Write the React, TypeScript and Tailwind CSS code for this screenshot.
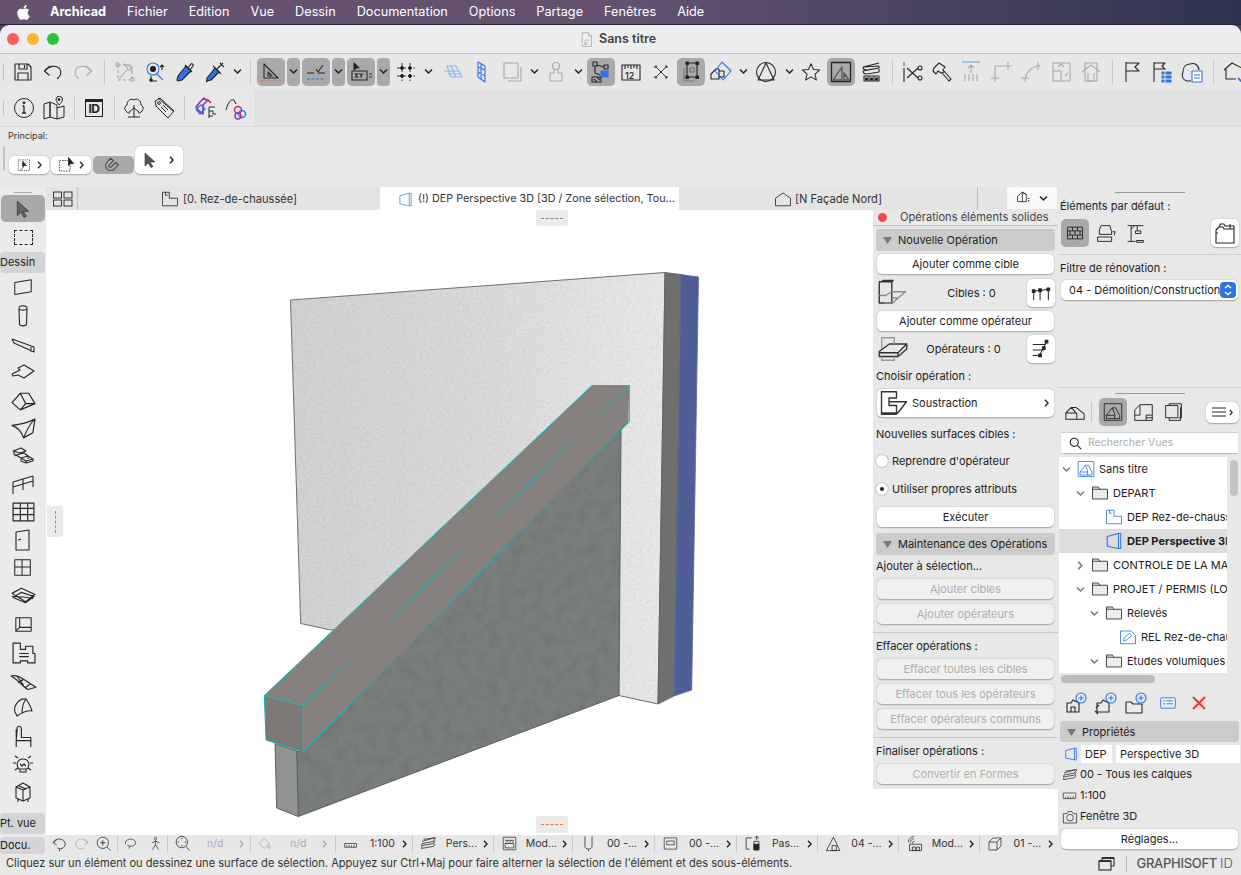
import React from 'react';
import { FaApple } from 'react-icons/fa';

const BLUE = '#2f74e6';
const ORANGE = '#e8752b';
const GREY = '#a8a8a8';

function Ic({ s = 24, c = '#262626', w = 1.1, children }: { s?: number; c?: string; w?: number; children: React.ReactNode }) {
  return (
    <svg width={s} height={s} viewBox="0 0 24 24" fill="none" stroke={c} strokeWidth={w} strokeLinejoin="round" className="shrink-0">
      {children}
    </svg>
  );
}

function Chev({ c = '#222' }: { c?: string }) {
  return (
    <svg width="9" height="7" viewBox="0 0 9 7" fill="none" stroke={c} strokeWidth="1.5" className="shrink-0">
      <path d="M1 1.5 4.5 5 8 1.5" />
    </svg>
  );
}

function Gt({ c = '#333', s = 7 }: { c?: string; s?: number }) {
  return (
    <svg width={s - 2} height={s + 1} viewBox="0 0 5 8" fill="none" stroke={c} strokeWidth="1.4" className="shrink-0">
      <path d="M1 .8 4 4 1 7.2" />
    </svg>
  );
}

const tb: Record<string, React.ReactNode> = {
  save: <Ic><path d="M4 4h13l3 3v13H4z" /><path d="M8 4v5h8V4M13.5 5v3M7 20v-7h10v7" /></Ic>,
  undo: <Ic><path d="M9 6 3.5 11l5 4.5" /><path d="M3.5 11c4-5 11-6.500 15-2.500 3 3.500 1 8-2.500 10.500" /></Ic>,
  redo: <Ic c="#aaa"><path d="m15 6 5.500 5-5 4.500" /><path d="M20.500 11c-4-5-11-6.500-15-2.500-3 3.500-1 8 2.500 10.500" /></Ic>,
  pick: <Ic c={GREY}><path d="M5 5h14v15H5z" strokeDasharray="3 2" /><path d="m6 19 9-10M11 4l6 2 2 5-3-1-5-6z" /><rect x="3" y="3" width="3" height="3" /><rect x="18" y="18" width="3" height="3" /></Ic>,
  find: <Ic><circle cx="10" cy="9" r="6" stroke={BLUE} /><circle cx="10" cy="9" r="2.500" fill="#222" /><path d="m14 14 6 6" stroke={BLUE} /><path d="M19 5v5M17 7l2-2 2 2M8 16v5h6" /><circle cx="8" cy="20" r="1.200" fill="#222" /></Ic>,
  drop: <Ic><path d="m13 6 5 5-9 9-4 1-1-1 1-4z" fill={BLUE} stroke="#222" /><path d="m12 5 7 7M15 8l3-4c1-1 3 1 2 2l-3 4" /></Ic>,
  syr: <Ic><path d="m12 8 4 4-8 8-4 1 0-3z" fill={BLUE} stroke="#222" /><path d="m10 6 8 8M14 9l6-6M17 3l4 4M3 22l2-2" /></Ic>,
  guide: <Ic><path d="M5 4v14h14z" /><path d="M9 12v4h4z" /><path d="M2 21h20" stroke={ORANGE} strokeDasharray="2.500 1.500" /></Ic>,
  snap: <Ic><path d="M3 13h7M14 13h7" /><path d="m12 9 2 3 5-7" /><path d="M3 19h18" stroke={BLUE} strokeDasharray="3 1.500" /></Ic>,
  xy: <Ic><path d="m5 3 0 7 2-2 3 0z" fill="#222" /><rect x="3" y="11" width="15" height="9" /><text x="5" y="18" fontSize="6.500" fontFamily="Inter" fontWeight="700" fill="#222" stroke="none">XY</text><path d="M20 14h3M20 17h3" /></Ic>,
  grid: <Ic w={0.9}><path d="M8 3v18M16 3v18M3 8h18M3 16h18" strokeDasharray="3.500 2" /><circle cx="8" cy="8" r="1.500" fill="#111" /><circle cx="16" cy="8" r="1.500" fill="#111" /><circle cx="8" cy="16" r="1.500" fill="#111" /><circle cx="16" cy="16" r="1.500" fill="#111" /></Ic>,
  plane: <Ic c="#8ab6ee"><path d="M8 6h9l6 11h-11zM12 6l5 11M5 11h15M9 14h12" /></Ic>,
  plane2: <Ic c={BLUE}><path d="M8 2 15 6v16l-7-5zM8 7l7 3M8 12l7 4M11 4v16" /></Ic>,
  stack: <Ic c={GREY}><rect x="4" y="3" width="14" height="15" /><path d="M8 21h13V7" /></Ic>,
  stamp: <Ic c={GREY}><circle cx="12" cy="6" r="3.500" /><path d="M10 9v4H6v8h12v-8h-4V9" /></Ic>,
  sel1: <Ic><rect x="4" y="2" width="4" height="4" /><rect x="15" y="5" width="4" height="4" /><path d="m8 5 7 2M6 6v7l5 2" /><rect x="12" y="11" width="7" height="6" fill={BLUE} stroke={BLUE} /><rect x="3" y="17" width="9" height="5" /><path d="M5 19l3 3M8 17l3 3" /></Ic>,
  ruler: <Ic><path d="M3 5h18v15H3V5zM6 5v4M9 5v3M12 5v4M15 5v3M18 5v4" /><text x="6" y="19" fontSize="9" fontFamily="Inter" fontWeight="500" fill="#222" stroke="none">12</text></Ic>,
  cross: <Ic w={0.9}><path d="m7 7 10 10M17 7 7 17" /><path d="M7 5v3M5 7h3M17 5v3M19 7h-3M7 19v-3M5 17h3M17 19v-3M19 17h-3" /></Ic>,
  sel2: <Ic><path d="M8 3h10v14H8z" /><path d="M5 8v13h11" stroke="#777" /><rect x="7" y="2" width="2.500" height="2.500" fill="#222" /><rect x="17" y="2" width="2.500" height="2.500" fill="#222" /><rect x="7" y="16" width="2.500" height="2.500" fill="#222" /><rect x="17" y="16" width="2.500" height="2.500" fill="#222" /><rect x="11" y="8" width="4" height="4" stroke="#777" /></Ic>,
  cube: <Ic><path d="M2 14 7 9h3v10H2z" /><path d="m13 2 9 9-8 9-8-9z" stroke={BLUE} /><path d="M10 11h5v6h-5" /></Ic>,
  tri: <Ic><circle cx="12" cy="12" r="9.500" /><path d="M12 3 4 20h16z" /></Ic>,
  star: <Ic s={22}><path d="m12 3 2.700 6.200 6.800.600-5.200 4.400 1.600 6.600L12 17.300l-5.900 3.500 1.600-6.600L2.500 9.800l6.800-.600z" /></Ic>,
  draft: <Ic w={1.3}><rect x="2.500" y="2.500" width="19" height="19" /><path d="M4 20 13 7v13zM15 13l5 7h-5zM15 16h3" stroke="#555" /></Ic>,
  layers: <Ic><path d="M4 7 20 3M4 7l16-1M4 7c0 2 2 3 4 3l12-2V6M4 11l16-3M4 11c0 2 2 3 4 3l12-2v-3" /><path d="M5 16h15v5H5zM10 16v5M15 16v5" /><path d="M6.500 18h2v2h-2zM11.500 18h2v2h-2zM16.500 18h2v2h-2z" fill="#222" /></Ic>,
  scis: <Ic><path d="M4 2v4" stroke={BLUE} /><path d="M4 8v14" /><path d="m7 8 11 10M7 18 18 8" /><circle cx="20" cy="8" r="2" /><circle cx="20" cy="18" r="2" /></Ic>,
  hammer: <Ic><path d="M5 8 10 3l6 4-2 3 1 2-3 1-3-2-2 3-3-3zM13 13l7 8 2-2-7-8" /></Ic>,
  up: <Ic c="#aaa"><path d="M3 2h18" stroke="#8ab6ee" strokeWidth="1.500" /><path d="M12 5v8M9 8l3-3 3 3M6 14v7M10 14v7M14 14v7M18 14v7" /></Ic>,
  fillet: <Ic c="#aaa"><path d="M6 22V6h17M2 18h8M19 2v8" /></Ic>,
  curve: <Ic c="#aaa"><path d="M6 22c0-9 6-16 15-16M2 18h8M19 2v8" /></Ic>,
  move: <Ic c="#aaa"><path d="M4 3h17v18H4zM4 11h8v10M9 7l3-3 3 3M16 16l3-3" /></Ic>,
  house: <Ic c="#aaa"><path d="M6 3h12v18H6zM3 12l9-7 9 7" /><path d="M9 13v8h6v-8" /></Ic>,
  flag: <Ic><path d="M6 2v20M6 3h13l-4 4 4 4H6" /></Ic>,
  flist: <Ic><path d="M5 2v20M5 3h11l-3 3 3 3H5" /><path d="M13 12h2v2h-2zM17 12h5v2h-5zM13 16h2v2h-2zM17 16h5v2h-5zM13 20h2v2h-2zM17 20h5v2h-5z" fill={BLUE} stroke={BLUE} /></Ic>,
  cloud: <Ic><path d="M11 21H7C3 20 1 16 3 12c0-5 3-8 7-8 5-2 9 2 9 6" /><rect x="12" y="11" width="10" height="11" fill="#fff" stroke={BLUE} /><path d="M14 15h6M14 18h6" stroke={BLUE} /></Ic>,
  last: <Ic><path d="M2 10 10 3l10 5v5M4 9v10h10" /><path d="m16 18 3 3 5-6" stroke={BLUE} strokeWidth="1.800" /></Ic>,
  info: <Ic w={1}><circle cx="12" cy="12" r="9.500" /><path d="M12 10v7M10 17h4M10.500 10H12" strokeWidth="1.300" /><circle cx="12" cy="6.800" r="1" fill="#222" /></Ic>,
  map: <Ic w={1}><path d="M2 8l6-2v15l-6 2zM8 6l7 3v14l-7-2zM15 12l7-2v11l-7 2" /><path d="M17 9c-2-3-3-4-3-6a3.300 3.300 0 0 1 6.500 0c0 2-1.500 4-3.500 6z" fill="#eee" /><circle cx="17" cy="3.500" r="1" fill="#222" /></Ic>,
  tree: <Ic w={1}><path d="M12 21V9M7 16l5-4 5 4M6 21h12M8 17c-5 0-7-6-3-8 0-5 5-7 7-5 3-2 7 0 7 5 4 2 2 8-3 8" /></Ic>,
  tag: <Ic w={1}><path d="M3 5 8 2l14 13-6 7L4 10zM6 2l15 13" /><circle cx="7" cy="7" r="1.400" /><path d="m9 11 5 5M11 9l5 5" /></Ic>,
  attrs: <Ic w={1}><path d="M7 6 11 2l3 3-4 4v9l-4-3-3-4z" stroke="#8a3aa8" strokeWidth="1.700" /><path d="M8 9 12 13 7 18 3 13z" stroke={BLUE} strokeWidth="1.400" /><path d="M14 3l4 4" stroke="#d7263d" strokeWidth="1.700" /><path d="M16 11v11M16 11h6M16 15h4v3M16 20h4M20 18h3" /></Ic>,
  attrs2: <Ic w={1}><path d="M3 14C5 6 8 3 11 4l2 4" /><circle cx="15" cy="14" r="3.500" stroke="#d7263d" strokeWidth="1.400" /><circle cx="19" cy="18" r="3.500" stroke={BLUE} strokeWidth="1.400" /><circle cx="15" cy="20" r="3" stroke="#8a3aa8" strokeWidth="1.400" /></Ic>,
};

const dr: React.ReactNode[] = [
  <Ic s={22}><path d="M3 6 21 3v13L3 19z" /></Ic>,
  <Ic s={24}><path d="M8 4c0-3 8-3 8 0l-.5 16c0 2.500-7 2.500-7 0zM8 5c1 1.500 7 1.500 8 0" /></Ic>,
  <Ic s={24}><path d="M1 7l22 8v5L3 11zM20 15v5" /></Ic>,
  <Ic s={24}><path d="M1 14 9 10 7 8l6-3 10 6-10 7-6-3-5 1z" /></Ic>,
  <Ic s={25}><path d="M1 14 9 5h8l6 10-14 6zM9 5l5 10h9M14 15l-5 6" /></Ic>,
  <Ic s={25}><path d="M1 9c5 2 9 5 11 12C15 14 19 6 23 3c-6 3-13 5-22 6zM23 3l-2 13-9 5" /></Ic>,
  <Ic s={24}><path d="M2 7l8-3 5 3-6 2zM5 11l8-2 4 3-7 2zM10 14l7-2 5 3-7 2zM3 8v2l2 2M10 15v2l5 2v-2M17 13v2M22 15v2l-7 2" /></Ic>,
  <Ic s={24}><path d="M2 10 22 4M2 22V10M22 4v11M12 7v11M2 15 22 9" /></Ic>,
  <Ic s={25}><path d="M2 3h20v17H2zM2 8h20M2 14h20M9 3v17M16 3v17" /></Ic>,
  <Ic s={24}><path d="M5 4 18 2v20H5zM7 12l3-1" /></Ic>,
  <Ic s={22}><path d="M3 3h17v17H3zM3 11h17M11 3v17" /></Ic>,
  <Ic s={25}><path d="M1 9 10 4l13 6-9 7zM2 13l8-5 12 4-8 6zM1 12c6 0 12 0 20 2" /></Ic>,
  <Ic s={23}><path d="M4 5h16v14H4zM8 5v10h12M4 19l4-4" /></Ic>,
  <Ic s={25}><path d="M2 3h7v6h5V6h7v7h2v9h-7v-2H9v2H2zM8 13h9M8 16h9" /></Ic>,
  <Ic s={27}><path d="M1 8c6-2 12 4 22 10l-7 2C12 18 7 11 1 8zM6 8l6 8M12 11l-5 3M18 15l-4 3" /></Ic>,
  <Ic s={24}><path d="M4 16C2 10 8 2 15 3c2 3 5 8 6 12-5-1-12 3-15 5zM15 3c-3 4-4 10-4 14" /></Ic>,
  <Ic s={25}><path d="M6 3c3-2 4 0 4 2v8h9v3H5zM5 16v6M19 16v6M5 5v8" /></Ic>,
  <Ic s={24}><path d="M8 17c-4-5-1-10 4-10s8 5 4 10zM9 17v3h6v-3M9 12l2 2 2-2 2 2M2 11h3M19 11h3M4 4l3 2M20 4l-3 2M4 18l3-2M20 18l-3-2" /></Ic>,
  <Ic s={24}><path d="M5 7l7-4 7 4v11l-7 3-7-3zM5 7l7 3 7-3M12 10v11M8 6l7 3" /><path d="M7 19v3M17 19v3" /></Ic>,
];

function Tool({ w, name, sel }: { w: string; name: string; sel?: boolean }) {
  return (
    <div className={`${w} h-full flex items-center justify-center shrink-0`}>
      {sel ? (
        <div className="w-[28px] h-[28px] rounded-[5px] bg-[#a9a9ab] flex items-center justify-center">{tb[name]}</div>
      ) : (
        tb[name]
      )}
    </div>
  );
}

function Cv({ w = 'w-[14px]', sel }: { w?: string; sel?: boolean }) {
  return (
    <div className={`${w} h-full flex items-center justify-center shrink-0`}>
      {sel ? (
        <div className="w-[13px] h-[28px] rounded-[4px] bg-[#a9a9ab] flex items-center justify-center"><Chev /></div>
      ) : (
        <Chev />
      )}
    </div>
  );
}

function Sep({ w = 'w-[12px]', h = 'h-[24px]' }: { w?: string; h?: string }) {
  return (
    <div className={`${w} h-full flex items-center justify-center shrink-0`}>
      <div className={`w-px ${h} bg-[#c8c8c8]`} />
    </div>
  );
}

function Header({ title }: { title: string }) {
  return (
    <div className="mx-[3px] h-[22px] pt-px bg-[#cbcbcb] rounded-[3px] flex items-center text-[11px] text-[#222] pl-[7px]">
      <svg width="9" height="7" viewBox="0 0 9 7" className="mr-[6px]"><path d="M0 0h9L4.500 7z" fill="#777" /></svg>
      {title}
    </div>
  );
}

function Btn({ children, off, className = '' }: { children: React.ReactNode; off?: boolean; className?: string }) {
  return (
    <div className={`mx-[4px] h-[20px] rounded-[5px] flex items-center justify-center text-[11px] shadow-[0_0.5px_1.5px_rgba(0,0,0,0.3)] ${off ? 'bg-[#f0f0f0] text-[#adadad]' : 'bg-white text-[#222]'} ${className}`}>
      {children}
    </div>
  );
}

function SqBtn({ children }: { children: React.ReactNode }) {
  return <div className="w-[28px] h-[28px] bg-white rounded-[5px] shadow-[0_0.5px_1.5px_rgba(0,0,0,0.3)] flex items-center justify-center shrink-0">{children}</div>;
}

function Lbl({ children, className = '' }: { children: React.ReactNode; className?: string }) {
  return <div className={`h-[14px] leading-[14px] text-[11px] text-[#222] ${className}`}>{children}</div>;
}

function Radio({ on, label, className = '' }: { on?: boolean; label: string; className?: string }) {
  return (
    <div className={`h-[14px] flex items-center text-[11px] text-[#222] pl-[3px] ${className}`}>
      <div className="w-[12px] h-[12px] rounded-full bg-white shadow-[0_0_1.5px_rgba(0,0,0,0.5)] flex items-center justify-center mr-[4px]">
        {on && <div className="w-[4px] h-[4px] rounded-full bg-[#222]" />}
      </div>
      {label}
    </div>
  );
}

const Folder = ({ s = 18 }: { s?: number }) => (
  <Ic s={s}><path d="M2 20V4h8l2 3h10v13z" fill="#ececec" /><path d="M2 7h10" /></Ic>
);

const PlanIcon = ({ c = BLUE }: { c?: string }) => (
  <Ic s={18} c={c}><path d="M2 3h10v8h10v10H2zM6 3v4h3" /></Ic>
);

const treeRows = [
  { d: 0, t: 'Sans titre', chev: 'down', icon: <Ic s={18} c={BLUE}><rect x="1.500" y="2" width="21" height="20" /><path d="M4 16 11 7h4l5 9v4H4zM11 7l3 7v6M4 16h10" /></Ic> },
  { d: 1, t: 'DEPART', chev: 'down', icon: <Folder /> },
  { d: 2, t: 'DEP Rez-de-chaussée', icon: <PlanIcon /> },
  { d: 2, t: 'DEP Perspective 3D', sel: true, icon: <Ic s={18} c={BLUE} w={1.4}><path d="M3 6 18 2h3v20h-3L3 19zM18 2v20" /></Ic> },
  { d: 1, t: 'CONTROLE DE LA MAQUETTE', chev: 'right', icon: <Folder /> },
  { d: 1, t: 'PROJET / PERMIS (LOT 1)', chev: 'down', icon: <Folder /> },
  { d: 2, t: 'Relevés', chev: 'down', icon: <Folder /> },
  { d: 3, t: 'REL Rez-de-chaussée', icon: <Ic s={18} c={BLUE}><path d="M2 4h14l6 6v11H2z" /><path d="m6 17 1-4 7-6 3 3-7 6z" /></Ic> },
  { d: 2, t: 'Etudes volumiques', chev: 'down', icon: <Folder /> },
];

const indent = ['pl-0', 'pl-[14px]', 'pl-[28px]', 'pl-[42px]'];

const quick = [
  { w: 'w-[77px]', icon: <Ic s={15}><path d="M1 12h19M1 12v6h19v-6M4 15v3M8 14v4M12 15v3M16 14v4" /></Ic>, t: '1:100' },
  { w: 'w-[81px]', icon: <Ic s={17}><path d="M3 9 20 4M5 6l17-2-3 5L3 12M3 12l-1 3 17-3 2-4M3 16l-1 3 17-3 2-4" /></Ic>, t: 'Pers...' },
  { w: 'w-[79px]', icon: <Ic s={15}><rect x="2" y="2" width="20" height="20" /><path d="M5 7h14M5 12l5-5M10 12l5-5M15 12l4-4M5 12h14v7H5z" /></Ic>, t: 'Mod...' },
  { w: 'w-[82px]', icon: <Ic s={17}><path d="M7 2v14c0 5 10 5 10 0V2M12 20v3" /></Ic>, t: '00 -...' },
  { w: 'w-[82px]', icon: <Ic s={15}><rect x="2" y="3" width="20" height="18" /><rect x="6" y="8" width="12" height="6" /></Ic>, t: '00 -...' },
  { w: 'w-[81px]', icon: <Ic s={17}><path d="M3 4h8M3 4v16h5M14 9h7v12h-7zM15 4l3-2 3 2M18 2v5" /><rect x="14" y="13" width="7" height="8" fill="#222" /></Ic>, t: 'Pas...' },
  { w: 'w-[81px]', icon: <Ic s={17}><path d="M2 22 12 3l9 19zM10 15h6v7h-6z" /></Ic>, t: '04 -...' },
  { w: 'w-[81px]', icon: <Ic s={17}><path d="M3 10c1-5 4-7 8-8M6 11c0-3 2-5 5-6M9 12c0-2 1-3 3-3" /><path d="M5 13h17v9H5zM9 17h4v5H9zM15 17h4v5h-4z" /></Ic>, t: 'Mod...' },
  { w: 'w-[78px]', icon: <Ic s={16}><path d="M3 9h12v12H3zM3 9l6-6h12l-6 6M21 3v12l-6 6" /></Ic>, t: '01 -...' },
];

function Bldg() {
  const wall = '290.500,300 665,272.500 658,704 619,695.500 610,620 331,630 300.700,623.500';
  const conc = '628,422 621,429 619,695.500 298.300,816.500 296.700,751 303,752';
  return (
    <svg width="827" height="625" viewBox="46 210 827 625" className="block">
      <defs>
        <linearGradient id="plaster" x1="290" y1="0" x2="665" y2="0" gradientUnits="userSpaceOnUse">
          <stop offset="0" stopColor="#d2d2d2" />
          <stop offset="0.55" stopColor="#dbdbdb" />
          <stop offset="1" stopColor="#e9e9e9" />
        </linearGradient>
        <linearGradient id="sideC" x1="275" y1="0" x2="298" y2="0" gradientUnits="userSpaceOnUse">
          <stop offset="0" stopColor="#8e9190" />
          <stop offset="1" stopColor="#939695" />
        </linearGradient>
        <filter id="fine" x="0" y="0" width="100%" height="100%">
          <feTurbulence type="fractalNoise" baseFrequency="0.3 0.45" numOctaves="2" seed="4" />
          <feColorMatrix values="0 0 0 0 0 0 0 0 0 0 0 0 0 0 0 0.1 0 0 0 -0.036" />
          <feComposite operator="in" in2="SourceGraphic" />
        </filter>
        <filter id="blotch" x="0" y="0" width="100%" height="100%">
          <feTurbulence type="fractalNoise" baseFrequency="0.09" numOctaves="4" seed="9" />
          <feColorMatrix values="0 0 0 0 0 0 0 0 0 0 0 0 0 0 0 0.14 0 0 0 -0.05" />
          <feComposite operator="in" in2="SourceGraphic" />
        </filter>
      </defs>

      {/* back wall */}
      <polygon points={wall} fill="url(#plaster)" stroke="#707070" strokeWidth="1" />
      <polygon points={wall} filter="url(#fine)" />
      <polygon points="665,272.500 681,274.500 674,696 658,704" fill="#6e706e" stroke="#5f5f5f" strokeWidth="0.800" />
      <polygon points="681,274.500 698.500,277 691.700,690 674,696" fill="#4f5f95" stroke="#5c6a9a" strokeWidth="0.800" />

      {/* concrete wall */}
      <polygon points={conc} fill="#797d7b" stroke="#5d5f5e" strokeWidth="1" />
      <polygon points={conc} filter="url(#blotch)" />
      <polygon points="275,743.500 296.700,751 298.300,816.500 276.700,808" fill="url(#sideC)" stroke="#5d5f5e" strokeWidth="1" />

      {/* beam */}
      <polygon points="592,385.500 629.300,385.500 303.300,705.500 264.300,695.600" fill="#86817f" />
      <polygon points="629.300,385.500 628.300,421.800 303.300,752 303.300,705.500" fill="#86807e" />
      <polygon points="264.300,695.600 303.300,705.500 303.300,752 266,740" fill="#7d7876" />
      <g fill="none" stroke="#12b5b8" strokeWidth="1">
        <path d="M592 385.500h37.300v36.300L303.300 752 266 740l-1.700-44.400z" />
        <path d="M264.300 695.600 303.300 705.500 629.300 385.500M303.300 705.500V752" />
      </g>
    </svg>
  );
}

export default function App() {
  return (
    <div className="w-[1241px] h-[875px] overflow-hidden flex flex-col bg-[#4a3f55] font-['Inter',sans-serif] text-[#222]">
      {/* menu bar */}
      <div className="h-[25px] shrink-0 flex items-center bg-[linear-gradient(90deg,#64526f_0%,#64526f_50%,#2e3350_100%)] border-b border-[#2a2433] text-white text-[12.7px] pl-[15px]">
        <FaApple className="text-[17px] mr-[18px]" />
        <span className="font-bold mr-[21px]">Archicad</span>
        <span className="mr-[21px]">Fichier</span>
        <span className="mr-[21px]">Edition</span>
        <span className="mr-[21px]">Vue</span>
        <span className="mr-[21px]">Dessin</span>
        <span className="mr-[21px]">Documentation</span>
        <span className="mr-[21px]">Options</span>
        <span className="mr-[21px]">Partage</span>
        <span className="mr-[21px]">Fenêtres</span>
        <span>Aide</span>
      </div>

      {/* title bar */}
      <div className="h-[29px] shrink-0 rounded-t-[9px] bg-[#eeeef0] border-b border-[#c4c4c4] flex items-center relative">
        <div className="flex gap-[8px] pl-[7px]">
          <div className="w-[12px] h-[12px] rounded-full bg-[#fc5d57]" />
          <div className="w-[12px] h-[12px] rounded-full bg-[#fdb52e]" />
          <div className="w-[12px] h-[12px] rounded-full bg-[#2ac43f]" />
        </div>
        <div className="absolute left-[579px] flex items-center gap-[5px] font-semibold text-[12.5px] text-[#444]">
          <Ic s={15} c="#999" w={1}><path d="M5 1h10l5 5v17H5zM15 1v5h5M9 13h7M9 17h3v3H9z" /></Ic>
          Sans titre
        </div>
      </div>

      {/* toolbar 1 */}
      <div className="h-[35px] shrink-0 bg-[#e7e7e8] flex items-center pl-[3px] overflow-hidden">
        <div className="w-[1px] h-[16px] bg-[#c0c0c0] mr-[4px] shrink-0" />
        <Tool w="w-[30px]" name="save" />
        <Tool w="w-[30px]" name="undo" />
        <Tool w="w-[30px]" name="redo" />
        <Sep />
        <Tool w="w-[30px]" name="pick" />
        <Tool w="w-[30px]" name="find" />
        <Tool w="w-[30px]" name="drop" />
        <Tool w="w-[30px]" name="syr" />
        <Cv />
        <Sep />
        <Tool w="w-[30px]" name="guide" sel />
        <Cv w="w-[15px]" sel />
        <Tool w="w-[30px]" name="snap" sel />
        <Cv w="w-[15px]" sel />
        <Tool w="w-[30px]" name="xy" sel />
        <Cv w="w-[15px]" sel />
        <Tool w="w-[30px]" name="grid" />
        <Cv />
        <Tool w="w-[32px]" name="plane" />
        <Tool w="w-[30px]" name="plane2" />
        <Tool w="w-[30px]" name="stack" />
        <Cv />
        <Tool w="w-[30px]" name="stamp" />
        <Cv w="w-[15px]" />
        <Tool w="w-[30px]" name="sel1" sel />
        <Tool w="w-[30px]" name="ruler" />
        <Tool w="w-[30px]" name="cross" />
        <Tool w="w-[30px]" name="sel2" sel />
        <Tool w="w-[30px]" name="cube" />
        <Cv />
        <Tool w="w-[32px]" name="tri" />
        <Cv />
        <Tool w="w-[30px]" name="star" />
        <Tool w="w-[30px]" name="draft" sel />
        <Tool w="w-[30px]" name="layers" />
        <Sep />
        <Tool w="w-[28px]" name="scis" />
        <Tool w="w-[30px]" name="hammer" />
        <Tool w="w-[30px]" name="up" />
        <Tool w="w-[30px]" name="fillet" />
        <Tool w="w-[30px]" name="curve" />
        <Tool w="w-[30px]" name="move" />
        <Tool w="w-[30px]" name="house" />
        <Sep />
        <Tool w="w-[28px]" name="flag" />
        <Tool w="w-[30px]" name="flist" />
        <Tool w="w-[31px]" name="cloud" />
        <Sep />
        <Tool w="w-[30px]" name="last" />
      </div>

      {/* toolbar 2 */}
      <div className="h-[37px] shrink-0 bg-[#e0e0e0] flex">
        <div className="w-[255px] h-full bg-[#e8e8e9] flex items-center pl-[3px]">
          <div className="w-[1px] h-[16px] bg-[#c0c0c0] mr-[5px]" />
          <Tool w="w-[30px]" name="info" />
          <Tool w="w-[30px]" name="map" />
          <Sep w="w-[10px]" />
          <div className="w-[30px] flex justify-center">
            <div className="w-[18px] h-[18px] border border-[#222] border-t-[3px] flex items-center justify-center font-bold text-[12px] leading-none tracking-[-0.5px]">ID</div>
          </div>
          <Sep w="w-[10px]" />
          <Tool w="w-[30px]" name="tree" />
          <Tool w="w-[30px]" name="tag" />
          <Sep w="w-[10px]" />
          <Tool w="w-[31px]" name="attrs" />
          <Tool w="w-[30px]" name="attrs2" />
        </div>
      </div>

      {/* principal */}
      <div className="h-[61px] shrink-0 bg-[#e8e8e9] relative border-t border-[#dcdcdc]">
        <div className="pl-[8px] pt-[3px] text-[9px] leading-[12px] text-[#333]">Principal:</div>
        <div className="flex items-end pl-[3px] mt-[4px]">
          <div className="w-[2px] h-[24px] bg-[#c4c4c4] mr-[4px] self-start" />
          <div className="w-[40px] h-[18px] bg-white rounded-[5px] shadow-[0_0.5px_1.5px_rgba(0,0,0,0.3)] flex items-center justify-center gap-[5px] mr-[2px]">
            <Ic s={15}><path d="M2 3h18v17H2z" strokeDasharray="2 1.500" /><path d="m9 5 0 9 3-2 3 0z" fill="#222" /><path d="M5 20l6-6" /></Ic>
            <Gt />
          </div>
          <div className="w-[40px] h-[18px] bg-white rounded-[5px] shadow-[0_0.5px_1.5px_rgba(0,0,0,0.3)] flex items-center justify-center gap-[3px] mr-[2px]">
            <Ic s={18}><path d="M2 6h14v14H2z" strokeDasharray="2 1.500" /><path d="m14 2 0 11 3-3 4 0z" fill="#222" /></Ic>
            <Gt />
          </div>
          <div className="w-[41px] h-[18px] bg-[#a9a9ab] rounded-[5px] flex items-center justify-center mr-[1px]">
            <Ic s={17} c="#4a4a4a" w={1.5}><path d="M8 2 3 7a7 7 0 0 0 10 10l6-6-4-3-6 6a2 2 0 0 1-3-3l6-6z" /></Ic>
          </div>
          <div className="w-[48px] h-[28px] bg-white rounded-[5px] shadow-[0_0.5px_1.5px_rgba(0,0,0,0.3)] flex items-center justify-center gap-[13px]">
            <svg width="12" height="16" viewBox="0 0 12 16"><path d="M1 1v13l3-3 3 4.500 2-1-3-4.500h5z" fill="#555" stroke="#333" strokeWidth=".6" /></svg>
            <Gt c="#222" />
          </div>
        </div>
      </div>

      {/* main */}
      <div className="h-[665px] shrink-0 flex">
        {/* toolbox */}
        <div className="w-[46px] shrink-0 bg-[#ebebed] flex flex-col items-center relative">
          <div className="mt-[5px] w-[18px] h-px bg-[#aaa] shrink-0" />
          <div className="mt-[2px] w-[44px] h-[27px] bg-[#a9a9ab] rounded-[5px] flex items-center justify-center shrink-0">
            <svg width="14" height="18" viewBox="0 0 12 16"><path d="M1 1v13l3-3 3 4.500 2-1-3-4.500h5z" fill="#666" stroke="#333" strokeWidth=".7" /></svg>
          </div>
          <div className="h-[28px] mt-[1px] flex items-center justify-center shrink-0">
            <div className="w-[19px] h-[15px] border border-dashed border-[#222]" />
          </div>
          <div className="mt-[1px] w-[45px] h-[21px] bg-[#d4d4d6] rounded-[4px] text-[11px] flex items-center shrink-0 self-start">Dessin</div>
          <div className="mt-[1px] flex flex-col items-center shrink-0">
            {dr.map((d, i) => (
              <div key={i} className="h-[28px] flex items-center justify-center">{d}</div>
            ))}
          </div>
          <div className="mt-[7px] w-[45px] h-[21px] bg-[#d4d4d6] rounded-[4px] text-[11px] flex items-center shrink-0 self-start">Pt. vue</div>
          <div className="mt-[3px] w-[45px] h-[17px] bg-[#d4d4d6] rounded-[4px] text-[11px] flex items-center shrink-0 self-start">Docu.</div>
        </div>

        {/* centre */}
        <div className="w-[1012px] shrink-0 flex flex-col bg-white">
          {/* tabs */}
          <div className="h-[23px] shrink-0 bg-[#e4e4e5] flex items-center text-[11.1px] text-[#333]">
            <div className="w-[32px] h-full flex items-center justify-end shrink-0 border-r border-[#c4c4c4] pr-[4px]">
              <svg width="20" height="16" viewBox="0 0 20 16" fill="none" stroke="#333" strokeWidth="1"><rect x=".5" y="1" width="8" height="6" /><rect x="11" y="1" width="8" height="6" /><rect x=".5" y="9" width="8" height="6" /><rect x="11" y="9" width="8" height="6" /></svg>
            </div>
            <div className="w-[302px] h-full flex items-center justify-center gap-[4px] pt-px">
              <Ic s={18}><path d="M2 3h9v8h11v10H2zM6 3v4h3" /></Ic>
              [0. Rez-de-chaussée]
            </div>
            <div className="w-[299px] h-full bg-white flex items-center pl-[18px] gap-[5px] whitespace-nowrap pt-px text-[10.8px]">
              <Ic s={15} c={BLUE}><path d="M3 6 18 2h3v20h-3L3 19zM18 2v20" /></Ic>
              (!) DEP Perspective 3D [3D / Zone sélection, Tou...
            </div>
            <div className="w-[299px] h-full flex items-center justify-center gap-[3px] border-r border-[#bdbdbd] pt-px">
              <Ic s={18}><path d="M2 11 12 4l10 7v10H2z" /></Ic>
              [N Façade Nord]
            </div>
            <div className="w-[29px] shrink-0" />
            <div className="w-[50px] h-[22px] self-start bg-[#fafafa] flex items-center justify-center gap-[4px]">
              <Ic s={19}><path d="M2 16V9l6-5 5 3v9zM8 4l5 3M8 4v12" /><path d="M15 12h2M15 15h2" strokeWidth="1.500" /></Ic>
              <Chev />
            </div>
          </div>

          {/* canvas */}
          <div className="h-[625px] shrink-0 flex relative">
            <div className="w-[827px] shrink-0"><Bldg /></div>

            {/* top / bottom / left handles */}
            <div className="absolute left-[490px] top-0 w-[32px] h-[16px] bg-[#ebebeb] rounded-b-[3px] flex items-center justify-center">
              <div className="w-[22px] h-0 border-t border-dashed border-[#888]" />
            </div>
            <div className="absolute left-[490px] top-[606px] w-[32px] h-[17px] bg-[#ebebeb] rounded-[3px] flex items-center justify-center">
              <div className="w-[22px] h-0 border-t border-dashed border-[#e8752b]" />
            </div>
            <div className="absolute left-[1px] top-[296px] w-[16px] h-[31px] bg-[#ebebeb] rounded-r-[3px] flex items-center justify-center">
              <div className="h-[22px] w-0 border-l border-dashed border-[#e8752b]" />
            </div>

            {/* solid element operations */}
            <div className="w-[185px] shrink-0 self-start bg-[#e8e8e9] pb-[5px]">
              <div className="h-[16px] border-b border-[#c4c4c4] flex items-center text-[11.1px] text-[#444]">
                <div className="w-[9px] h-[9px] rounded-full bg-[#f04a45] ml-[5px] mr-[13px]" />
                Opérations éléments solides
              </div>
              <div className="mt-[3px]"><Header title="Nouvelle Opération" /></div>
              <Btn className="mt-[3px]">Ajouter comme cible</Btn>
              <div className="mt-[5px] h-[28px] flex items-center pl-[5px] pr-[3px] text-[11px]">
                <Ic s={30} c="#333"><path d="M1 3h10v17H1zM3 3l1-1h8v1M11 3v17" /><path d="M1 14h5l5-3h11l-6 5H11M5 20h7l4-4" stroke="#8a8a8a" /></Ic>
                <span className="flex-1 text-center pl-[8px]">Cibles : 0</span>
                <SqBtn><Ic s={22}><path d="M3 10l18-2M4 10v10M11 9v11M20 8v12" /><rect x="2.500" y="8.500" width="3" height="3" fill="#222" /><rect x="9.500" y="7.500" width="3" height="3" fill="#222" /><rect x="18.500" y="6.500" width="3" height="3" fill="#222" /></Ic></SqBtn>
              </div>
              <Btn className="mt-[4px]">Ajouter comme opérateur</Btn>
              <div className="mt-[4px] h-[28px] flex items-center pl-[5px] pr-[3px] text-[11px]">
                <Ic s={30} c="#333"><path d="M1 14 9 8h14l-7 7H1zM1 14v4h15v-3M16 18l7-6V8" /><path d="M3 12V3h10v5M3 18v3h10v-3" stroke="#999" /></Ic>
                <span className="flex-1 text-center pr-[8px]">Opérateurs : 0</span>
                <SqBtn><Ic s={22}><path d="M3 7h14M3 13h12M3 19h10M18 4 10 20" /><rect x="16.500" y="2.500" width="3" height="3" fill="#222" /><rect x="13.500" y="9.500" width="3" height="3" fill="#222" /><rect x="9.500" y="17.500" width="3" height="3" fill="#222" /></Ic></SqBtn>
              </div>
              <Lbl className="mt-[6px] pl-[3px]">Choisir opération :</Lbl>
              <div className="mt-[6px] mx-[4px] h-[28px] bg-white rounded-[5px] shadow-[0_0.5px_1.5px_rgba(0,0,0,0.3)] flex items-center text-[11px] pl-[2px] pr-[5px]">
                <Ic s={30} c="#333"><path d="M2 3h12v5H8v6h6v7H2zM8 11h14l-7 9H2" /></Ic>
                <span className="flex-1 pl-[3px]">Soustraction</span>
                <Gt c="#222" />
              </div>
              <Lbl className="mt-[10px] pl-[3px]">Nouvelles surfaces cibles :</Lbl>
              <Radio label="Reprendre d'opérateur" className="mt-[13px]" />
              <Radio on label="Utiliser propres attributs" className="mt-[14px]" />
              <Btn className="mt-[11px]">Exécuter</Btn>
              <div className="mt-[6px]"><Header title="Maintenance des Opérations" /></div>
              <Lbl className="mt-[4px] pl-[3px]">Ajouter à sélection...</Lbl>
              <Btn off className="mt-[6px]">Ajouter cibles</Btn>
              <Btn off className="mt-[5px]">Ajouter opérateurs</Btn>
              <div className="mt-[8px] h-px bg-[#c8c8c8]" />
              <Lbl className="mt-[6px] pl-[3px]">Effacer opérations :</Lbl>
              <Btn off className="mt-[6px]">Effacer toutes les cibles</Btn>
              <Btn off className="mt-[5px]">Effacer tous les opérateurs</Btn>
              <Btn off className="mt-[5px]">Effacer opérateurs communs</Btn>
              <div className="mt-[8px] h-px bg-[#c8c8c8]" />
              <Lbl className="mt-[6px] pl-[3px]">Finaliser opérations :</Lbl>
              <Btn off className="mt-[6px]">Convertir en Formes</Btn>
            </div>
          </div>

          {/* quick options */}
          <div className="h-[17px] shrink-0 bg-[#e7e7e8] flex items-center text-[10.5px] text-[#333] whitespace-nowrap">
            <div className="w-[72px] h-full flex items-center justify-center gap-[5px] border-r border-[#c8c8c8] shrink-0">
              <Ic s={17}><path d="M3 11 8 7M3 11l5 3M3 11c3-8 17-7 17 2 0 6-8 8-11 5M12 20v3" /></Ic>
              <Ic s={17} c="#aaa"><path d="M21 11 16 7M21 11l-5 3M21 11c-3-8-17-7-17 2 0 6 8 8 11 5" /></Ic>
              <Ic s={17}><circle cx="11" cy="11" r="8" /><path d="m17 17 5 5M11 7v8M7 11h8" /></Ic>
            </div>
            <div className="w-[50px] h-full flex items-center justify-center gap-[10px] border-r border-[#c8c8c8] shrink-0">
              <Ic s={15}><path d="M4 13c-1-5 3-8 8-8s9 3 8 7-6 5-9 4M9 20l2-4-4-1" /></Ic>
              <Ic s={15}><circle cx="12" cy="4" r="2" /><path d="M12 7v7l-5 8M12 14l5 8M6 11l6-3 6 3" /></Ic>
            </div>
            <div className="w-[83px] h-full flex items-center pl-[6px] gap-[16px] text-[#aaa] border-r border-[#c8c8c8] shrink-0">
              <Ic s={17}><circle cx="11" cy="10" r="8" /><path d="m17 16 5 6M11 4v2M11 14v2M5 10h2M15 10h2" /></Ic>
              <span>n/d</span>
              <Gt c="#aaa" />
            </div>
            <div className="w-[85px] h-full flex items-center pl-[6px] gap-[16px] text-[#aaa] border-r border-[#c8c8c8] shrink-0">
              <Ic s={17} c="#aaa"><path d="m3 12 7-7 7 7-7 7zM17 12v7M14 16l3 3 3-3" /></Ic>
              <span>n/d</span>
              <Gt c="#aaa" />
            </div>
            {quick.map((q, i) => (
              <div key={i} className={`${q.w} h-full flex items-center pl-[3px] pr-[5px] shrink-0 ${i < 8 ? 'border-r border-[#c8c8c8]' : ''}`}>
                <div className="w-[24px] flex justify-center shrink-0">{q.icon}</div>
                <span className="flex-1 text-center">{q.t}</span>
                <Gt c="#222" />
              </div>
            ))}
          </div>
        </div>

        {/* right panel */}
        <div className="w-[183px] shrink-0 bg-[#e8e8e9] flex flex-col text-[11px]">
          <div className="mt-[5px] w-[70px] h-px bg-[#999] ml-[57px] shrink-0" />
          <Lbl className="mt-[6px] pl-[2px]">Éléments par défaut :</Lbl>
          <div className="mt-[6px] h-[28px] flex items-center pl-[3px] pr-[2px] shrink-0">
            <div className="w-[28px] h-[28px] rounded-[5px] bg-[#a9a9ab] flex items-center justify-center">
              <Ic s={20}><path d="M3 5h18v14H3zM3 9.500h18M3 14.500h18M9 5v4.500M15 5v4.500M6 9.500v5M12 9.500v5M18 9.500v5M9 14.500V19M15 14.500V19" /></Ic>
            </div>
            <div className="w-[30px] ml-[1px] flex justify-center">
              <Ic s={21}><path d="M7 3h10l2 7v3H5V8zM3 16h16v5H3zM20 10h3l-1 4M6 18.500h.100M11 18.500h.100M16 18.500h.100" /></Ic>
            </div>
            <div className="w-[30px] flex justify-center">
              <Ic s={21}><path d="M3 3h18M7 3v18M3 21h9M7 7l4-4M14 3v6M12 9h6v3h-6zM13 20h8v2h-8z" /></Ic>
            </div>
            <div className="flex-1" />
            <SqBtn><Ic s={24}><path d="M3 22V9l3-3h4l1 2h10v14zM7 6V3h4l1 2h9v3M3 12h2M17 8V3" /></Ic></SqBtn>
          </div>
          <div className="mt-[7px] h-px bg-[#cfcfcf] shrink-0" />
          <Lbl className="mt-[6px] pl-[2px]">Filtre de rénovation :</Lbl>
          <div className="mt-[5px] mx-[3px] h-[20px] bg-white rounded-[5px] shadow-[0_0.5px_1.5px_rgba(0,0,0,0.3)] flex items-center pl-[8px] pr-[2px] shrink-0">
            <span className="flex-1 whitespace-nowrap">04 - Démolition/Construction</span>
            <div className="w-[16px] h-[16px] rounded-[4px] bg-[#2f74e6] flex items-center justify-center">
              <svg width="8" height="12" viewBox="0 0 8 12" fill="none" stroke="#fff" strokeWidth="1.400"><path d="M1 4 4 1.500 7 4M1 8l3 2.500L7 8" /></svg>
            </div>
          </div>
          <div className="mt-[87px] h-px bg-[#d4d4d4] shrink-0" />
          <div className="mt-[5px] w-[70px] h-px bg-[#999] ml-[57px] shrink-0" />
          <div className="mt-[4px] h-[28px] flex items-center pl-[4px] pr-[2px] shrink-0">
            <div className="w-[26px] flex justify-center"><Ic s={22}><path d="M2 20v-7l6-6h5l9 7v6zM8 7l6 7v6M2 13h12" /></Ic></div>
            <div className="w-px h-[20px] bg-[#c8c8c8] mr-[7px] ml-[3px]" />
            <div className="w-[28px] h-[28px] rounded-[5px] bg-[#a9a9ab] flex items-center justify-center">
              <Ic s={20}><rect x="1.500" y="2" width="21" height="20" /><path d="M4 16 11 7h4l5 9v4H4zM11 7l3 7v6M4 16h10" /></Ic>
            </div>
            <div className="w-[30px] ml-[1px] flex justify-center"><Ic s={21}><path d="M2 21V9l6-6h14v18zM8 3v12H2M15 15h7M15 18h7M15 15v6" /></Ic></div>
            <div className="w-[30px] flex justify-center"><Ic s={21}><path d="M3 17V4h14v14H3zM7 4V2h14v16h-3M17 21H7v-3M20 6v15h-3" /></Ic></div>
            <div className="flex-1" />
            <div className="w-[33px] h-[21px] bg-white rounded-[6px] shadow-[0_0.5px_1.5px_rgba(0,0,0,0.3)] flex items-center justify-center gap-[3px]">
              <svg width="14" height="10" viewBox="0 0 14 10" stroke="#222" strokeWidth="1"><path d="M0 1h14M0 5h14M0 9h14" /></svg>
              <Gt c="#222" s={6} />
            </div>
          </div>
          <div className="mt-[6px] mx-[3px] h-[21px] bg-white border-t border-[#d0d0d0] shadow-[0_0.5px_1px_rgba(0,0,0,0.2)] flex items-center pl-[7px] shrink-0">
            <Ic s={15}><circle cx="10" cy="10" r="6.500" strokeWidth="1.800" /><path d="m15 15 6 6" strokeWidth="2" /></Ic>
            <span className="ml-[5px] text-[#aeaeae] text-[10.5px]">Rechercher Vues</span>
          </div>
          <div className="mt-[4px] h-[216px] flex shrink-0 pl-px">
            <div className="w-[168px] bg-white overflow-hidden">
              {treeRows.map((r) => (
                <div key={r.t} className={`h-[24px] flex items-center whitespace-nowrap overflow-hidden ${indent[r.d]} ${r.sel ? 'bg-[#dcdcdc] font-bold' : ''}`}>
                  <div className="w-[14px] flex justify-center shrink-0">
                    {r.chev === 'down' && <Chev c="#777" />}
                    {r.chev === 'right' && <Gt c="#777" s={8} />}
                  </div>
                  <div className="ml-[4px] mr-[4px] shrink-0">{r.icon}</div>
                  <span>{r.t}</span>
                </div>
              ))}
            </div>
            <div className="flex-1 flex justify-center pt-[3px]">
              <div className="w-[8px] h-[36px] rounded-full bg-[#c2c2c2]" />
            </div>
          </div>
          <div className="h-[12px] flex items-center pl-[3px] shrink-0">
            <div className="w-[94px] h-[8px] rounded-full bg-[#bcbcbc]" />
          </div>
          <div className="mt-[6px] h-[24px] flex items-center pl-[3px] shrink-0">
            <div className="w-[30px] flex justify-center"><Ic s={24}><path d="M3 21v-9h4l2-3 6 3v9zM7 21v-5h4v5" /><circle cx="17" cy="7" r="5" stroke={BLUE} fill="#e8e8e9" /><path d="M17 4.500v5M14.500 7h5" stroke={BLUE} /></Ic></div>
            <div className="w-[30px] flex justify-center"><Ic s={24}><path d="M3 21v-9h4l2-3 6 3v9zM2 17l3-3M1 20l3 3" /><circle cx="17" cy="7" r="5" stroke={BLUE} fill="#e8e8e9" /><path d="M17 4.500v5M14.500 7h5" stroke={BLUE} /></Ic></div>
            <div className="w-[30px] flex justify-center"><Ic s={24}><path d="M2 22V11h5l2 2h9v9z" fill="#ececec" /><circle cx="17" cy="7" r="5" stroke={BLUE} fill="#e8e8e9" /><path d="M17 4.500v5M14.500 7h5" stroke={BLUE} /></Ic></div>
            <div className="w-[34px] flex justify-center"><Ic s={18} c={BLUE}><rect x="2" y="5" width="20" height="14" rx="2" /><path d="M6 9h2M10 9h8M6 13h2M10 13h8" /></Ic></div>
            <div className="w-[28px] flex justify-center">
              <svg width="16" height="16" viewBox="0 0 16 16" stroke="#ef3b2d" strokeWidth="2.200"><path d="m2 2 12 12M14 2 2 14" /></svg>
            </div>
          </div>
          <div className="mt-[6px] shrink-0 [&>div]:mx-[2px] [&>div]:h-[21px]"><Header title="Propriétés" /></div>
          <div className="mt-[3px] h-[18px] flex items-center pl-[2px] pr-[1px] shrink-0">
            <div className="w-[21px] flex justify-center shrink-0"><Ic s={14} c={BLUE} w={1.5}><path d="M3 6 18 2h3v20h-3L3 19zM18 2v20" /></Ic></div>
            <div className="w-[31px] h-[18px] bg-white flex items-center pl-[4px] shrink-0">DEP</div>
            <div className="w-[124px] ml-[4px] h-[18px] bg-white flex items-center pl-[4px] shrink-0">Perspective 3D</div>
          </div>
          <div className="mt-px h-[21px] flex items-center pl-[1px]"><div className="w-[21px] flex justify-center"><Ic s={16}><path d="M3 9 20 4M5 6l17-2-3 5L3 12M3 12l-1 3 17-3 2-4M3 16l-1 3 17-3 2-4" /></Ic></div>00 - Tous les calques</div>
          <div className="h-[21px] flex items-center pl-[1px]"><div className="w-[21px] flex justify-center"><Ic s={15}><path d="M2 8h20v9H2zM6 14v3M10 13v4M14 14v3M18 13v4" /></Ic></div>1:100</div>
          <div className="h-[21px] flex items-center pl-[1px]"><div className="w-[21px] flex justify-center"><Ic s={16}><path d="M2 7h5l2-3h6l2 3h5v14H2z" /><circle cx="12" cy="13" r="5" /></Ic></div>Fenêtre 3D</div>
          <Btn className="mt-[2px] !mx-[3px]">Réglages...</Btn>
        </div>
      </div>

      {/* status bar */}
      <div className="h-[23px] shrink-0 bg-[#e8e8e9] flex items-center pl-[6px] text-[11.1px] text-[#333] whitespace-nowrap">
        <span className="flex-1">Cliquez sur un élément ou dessinez une surface de sélection. Appuyez sur Ctrl+Maj pour faire alterner la sélection de l'élément et des sous-éléments.</span>
        <svg width="17" height="14" viewBox="0 0 17 14" fill="none" stroke="#333" strokeWidth="1.200" className="mr-[11px]"><path d="M4 4V1h12v8h-3" /><path d="M4 1h12" strokeWidth="2" /><rect x="1" y="4" width="12" height="9" /><path d="M1 4h12" strokeWidth="2" /></svg>
        <div className="w-px h-[16px] bg-[#b8b8b8] mr-[10px]" />
        <span className="text-[13px] font-medium tracking-[-0.3px] text-[#555] mr-[3px]">GRAPHISOFT</span>
        <span className="text-[13px] font-light text-[#555] w-[21px]">ID</span>
      </div>
    </div>
  );
}
